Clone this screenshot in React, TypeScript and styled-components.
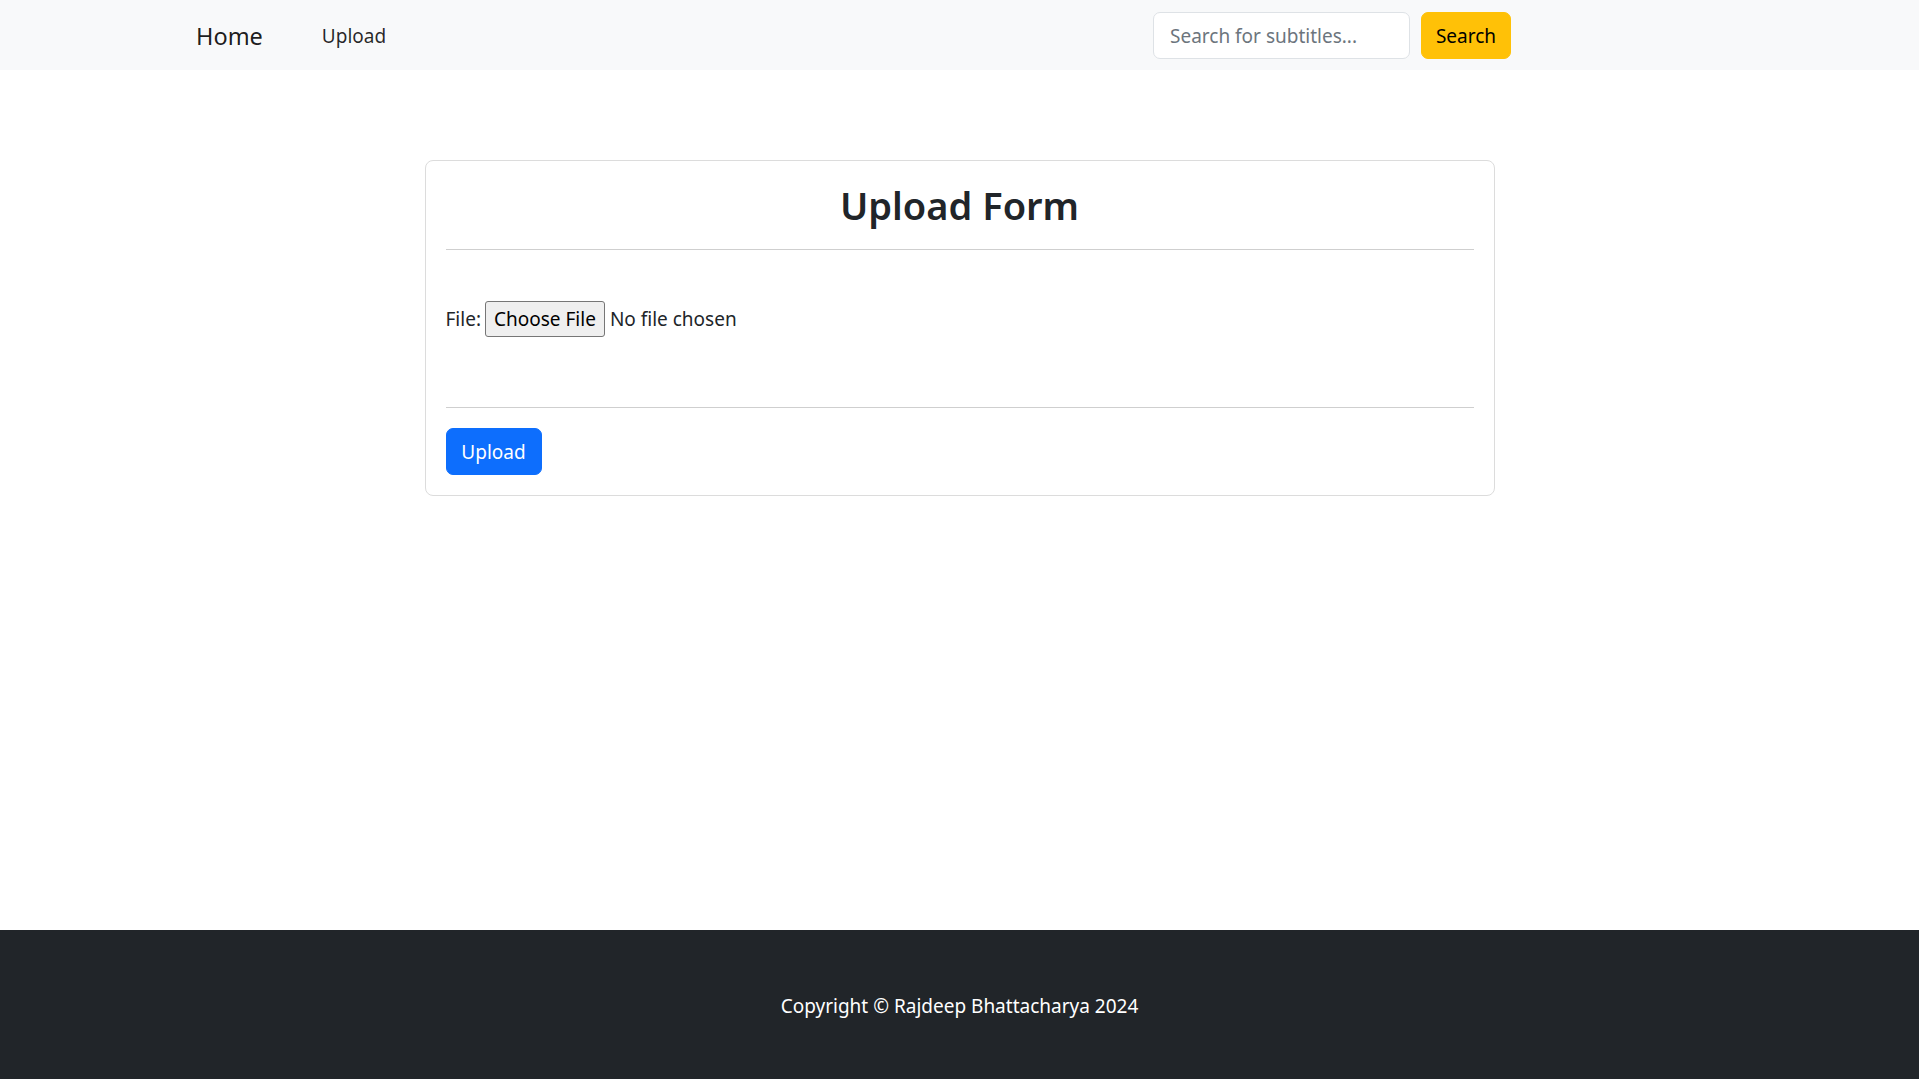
import React from "react";
import styled, { createGlobalStyle } from "styled-components";

const Global = createGlobalStyle`
  html, body { margin: 0; padding: 0; }
  body {
    font-family: "Noto Sans", "Open Sans", "Liberation Sans", sans-serif;
    font-size: 19px;
    color: #212529;
    background: #fff;
  }
  * { box-sizing: border-box; }
`;

const Page = styled.div`
  min-height: 100vh;
  display: flex;
  flex-direction: column;
`;

const NavBar = styled.nav`
  height: 70px;
  background: #f8f9fa;
  display: flex;
  align-items: center;
`;

const NavInner = styled.div`
  width: 1511px;
  padding-left: 196px;
  display: flex;
  align-items: center;
`;

const Brand = styled.a`
  font-size: 23.5px;
  color: rgba(0, 0, 0, 0.9);
  text-decoration: none;
  margin-right: 59px;
  padding-top: 2px;
`;

const NavLink = styled.a`
  font-size: 19px;
  color: rgba(0, 0, 0, 0.85);
  text-decoration: none;
  padding-top: 2px;
`;

const SearchForm = styled.form`
  margin-left: auto;
  display: flex;
  gap: 11px;
`;

const SearchInput = styled.input`
  width: 257px;
  height: 47px;
  padding: 2px 16px 0;
  font: inherit;
  font-size: 19px;
  color: #212529;
  background: #fff;
  border: 1px solid #dee2e6;
  border-radius: 7px;
  outline: none;
  &::placeholder { color: #6c757d; }
`;

const SearchButton = styled.button`
  width: 90px;
  height: 47px;
  font: inherit;
  font-size: 19px;
  color: #000;
  background: #ffc107;
  border: 1px solid #ffc107;
  border-radius: 7px;
  padding: 2px 0 0;
`;

const Main = styled.main`
  flex: 1;
  display: flex;
  justify-content: center;
  align-items: flex-start;
  padding-top: 90px;
`;

const Card = styled.div`
  width: 1070px;
  border: 1px solid #dcdcdc;
  border-radius: 8px;
  padding: 20px;
`;

const Title = styled.h2`
  margin: 0;
  font-size: 38px;
  line-height: 48px;
  font-weight: 600;
  text-align: center;
`;

const Rule = styled.hr<{ $before: number }>`
  border: 0;
  border-top: 1px solid #cfcfcf;
  margin: ${(p) => p.$before}px 0 0 0;
`;

const FieldRow = styled.div`
  display: flex;
  align-items: center;
  margin-top: 51px;
  margin-bottom: 70px;
  height: 36px;
`;

const Label = styled.label`
  font-size: 19px;
  margin-right: 4px;
`;

const FileInput = styled.input`
  font: inherit;
  font-size: 19px;
  color: #212529;
  &::file-selector-button {
    font: inherit;
    font-size: 19px;
    height: 36px;
    padding: 0 8px;
    margin-right: 5px;
    color: #000;
    background: #efefef;
    border: 1px solid #767676;
    border-radius: 3px;
  }
`;

const SubmitButton = styled.button`
  margin-top: 20px;
  width: 96px;
  height: 47px;
  font: inherit;
  font-size: 19px;
  color: #fff;
  background: #0d6efd;
  border: 1px solid #0d6efd;
  border-radius: 7px;
  padding: 0;
  display: block;
`;

const Footer = styled.footer`
  height: 149px;
  padding-top: 2px;
  background: #212529;
  color: #fff;
  display: flex;
  align-items: center;
  justify-content: center;
  font-size: 19px;
`;

export default function App() {
  return (
    <Page>
      <Global />
      <NavBar>
        <NavInner>
          <Brand href="#">Home</Brand>
          <NavLink href="#">Upload</NavLink>
          <SearchForm onSubmit={(e) => e.preventDefault()}>
            <SearchInput placeholder="Search for subtitles..." />
            <SearchButton type="submit">Search</SearchButton>
          </SearchForm>
        </NavInner>
      </NavBar>
      <Main>
        <Card>
          <Title>Upload Form</Title>
          <Rule $before={20} />
          <FieldRow>
            <Label htmlFor="file">File:</Label>
            <FileInput id="file" type="file" />
          </FieldRow>
          <Rule $before={0} />
          <SubmitButton type="button">Upload</SubmitButton>
        </Card>
      </Main>
      <Footer>Copyright © Rajdeep Bhattacharya 2024</Footer>
    </Page>
  );
}
